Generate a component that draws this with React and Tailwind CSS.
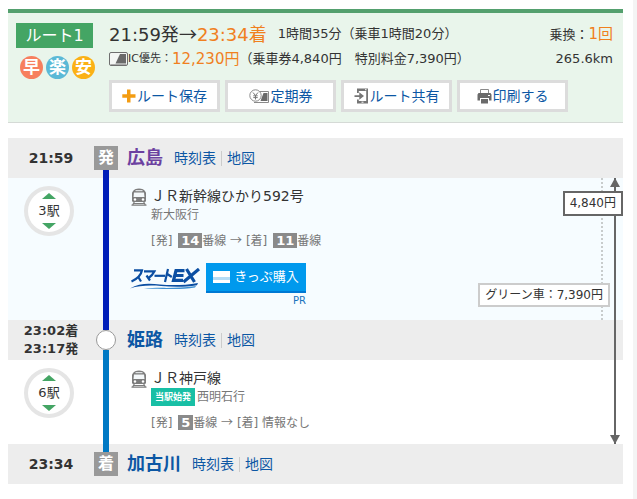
import React from 'react'

function IcCardIcon() {
    return (
        <svg width="19" height="14" viewBox="0 0 19 14" className="shrink-0">
            <rect x="0.500" y="0.500" width="18" height="13" rx="1.500" fill="#f4f6f4" stroke="#6f6f6f" />
            <path d="M1.500 12.500h16" stroke="#aaa" />
            <path d="M11 2H17V11.500H6.500Z" fill="#6a6a6a" />
        </svg>
    )
}

function PlusIcon() {
    return (
        <svg width="14" height="14" viewBox="0 0 14 14" className="shrink-0">
            <path d="M5 0.500h3.500v4.700h5v3.500h-5v4.800h-3.500v-4.800h-4.700v-3.500h4.700z" fill="#f39c12" />
        </svg>
    )
}

function PassIcon() {
    return (
        <svg width="21" height="15" viewBox="0 0 21 15" className="shrink-0">
            <path d="M10 2.500h9.500v11H5" fill="#fff" stroke="#8a8a8a" />
            <path d="M14.500 4H18.500v8h-7z" fill="#6a6a6a" />
            <circle cx="6.500" cy="6.500" r="5.700" fill="#fff" stroke="#8a8a8a" />
            <path d="M4 3.500l2.500 3L9 3.500M6.500 6.500V10.500M4.300 6.800h4.400M4.300 8.600h4.400" fill="none" stroke="#777" />
        </svg>
    )
}

function ShareIcon() {
    return (
        <svg width="15" height="16" viewBox="0 0 15 16" className="shrink-0">
            <path d="M3 0.500h11v15H3v-4h1.800v1.500h7.400V3H4.800v2H3z" fill="#757575" />
            <path d="M7.500 14.200h2M11 1.700h1.500" stroke="#fff" />
            <path d="M0.500 7.200h4.800V4.200L10 8l-4.700 3.800V8.900H0.500z" fill="#757575" />
        </svg>
    )
}

function PrinterIcon() {
    return (
        <svg width="15" height="15" viewBox="0 0 15 15" className="shrink-0">
            <path d="M3.500 4.500V0.500h8v4" fill="#fff" stroke="#8a8a8a" />
            <path d="M1.500 4h12l1 1.500v6h-2.500V9H3v2.500H0.500v-6z" fill="#6a6a6a" />
            <path d="M4 10h7v4.500H4z" fill="#6a6a6a" />
            <path d="M11 6.500h2" stroke="#fff" />
        </svg>
    )
}

function TrainIcon() {
    return (
        <svg width="16" height="18" viewBox="0 0 16 18" className="shrink-0">
            <path d="M4 1.200Q8 -0.400 12 1.200L13.500 2.500 15 4.500V12.500Q15 14 13.500 14H2.500Q1 14 1 12.500V4.500L2.500 2.500Z" fill="#7d7d7d" />
            <path d="M4.500 2.700h7" stroke="#f4f8fa" />
            <path d="M3 4.500h10l.5 4.500h-11z" fill="#f4f8fa" />
            <circle cx="4" cy="11.500" r="1.200" fill="#fff" />
            <circle cx="12" cy="11.500" r="1.200" fill="#fff" />
            <path d="M3.300 14L1.300 17.500M12.700 14L14.700 17.500M2.500 15.500h11M0.500 17.200h15" fill="none" stroke="#7d7d7d" strokeWidth="1.200" />
        </svg>
    )
}

function SmartExLogo() {
    return (
        <svg width="70" height="22" viewBox="0 0 70 22" className="shrink-0" role="img" aria-label="スマートEX">
            <g fill="none" stroke="#0b4ea2" strokeWidth="2.200">
                <path d="M4 2.300h8C11 7.500 7 11 1.500 13.500M8 8.500l3 5" />
                <path d="M14 3.300h10.500C23 6.500 21 8.500 18 10.500M16.500 7.500l3.500 5" />
                <path d="M24.500 7.800h10.500" />
                <path d="M38 1l-3 13M37.300 6l4.500 3" />
            </g>
            <g fill="none" stroke="#0b4ea2" strokeWidth="3.200">
                <path d="M54.500 2.600H46L43.500 12.400h9.500M45 7.500h8.500" />
                <path d="M56.500 1l8 13M69 1L53.500 14" />
            </g>
            <path d="M0 20.500C9 15 19 15.500 30 16.500S54 17.500 68 15l-1 2.200C54 19.500 42 19 31 18S9 17.500 0 20.500z" fill="#0b4ea2" />
            <path d="M14 21C26 18.500 44 21.500 66 18l-1 1.600C48 22.500 28 20 14 21z" fill="#3d8fd1" />
        </svg>
    )
}

function TicketIcon() {
    return (
        <svg width="17" height="12" viewBox="0 0 17 12" className="shrink-0">
            <path d="M0 0h17v12H0z" fill="#fff" />
            <path d="M0 6h17v3H0z" fill="#b5dcf5" />
        </svg>
    )
}

const feature = 'flex size-[23px] shrink-0 items-center justify-center rounded-full text-[17px] font-bold leading-none text-white'

function ActionButton({ icon, label }) {
    return (
        <button type="button" className="flex h-8 w-[111px] items-center justify-center gap-px border-3 border-[#dcdcdc] bg-white text-sm whitespace-nowrap text-[#0c57a4]">
            {icon}
            {label}
        </button>
    )
}

function RouteHeader() {
    return (
        <header className="flex gap-4 border-t-4 border-b border-t-[#54a06e] border-b-[#d5dad6] bg-[#e9f5eb] pr-2.5 pb-2.5 pl-2">
            <div className="w-[77px] shrink-0 pt-[10px]">
                <h1 className="flex h-[25px] items-center justify-center bg-[#44a564] text-base leading-none text-white">ルート1</h1>
                <div className="mt-2 flex gap-[3px] pl-1">
                    <span className={`${feature} bg-[#f77f5e]`}>早</span>
                    <span className={`${feature} bg-[#5bb9d6]`}>楽</span>
                    <span className={`${feature} bg-[#fbb116]`}>安</span>
                </div>
            </div>
            <div className="flex-1 pt-2">
                <div className="flex items-start justify-between whitespace-nowrap">
                    <div>
                        <p className="flex h-[26px] items-center gap-[11px]">
                            <span className="text-lg leading-[26px]">
                                21:59発<span className="font-['Noto_Sans_CJK_JP']">→</span><span className="text-[#f0801e]">23:34着</span>
                            </span>
                            <span>1時間35分（乗車1時間20分）</span>
                        </p>
                        <p className="flex h-6 items-center">
                            <IcCardIcon />
                            <span className="text-[11px]">IC優先：</span>
                            <span className="text-[15px] text-[#f0801e]">12,230円</span>
                            <span>（乗車券4,840円　特別料金7,390円）</span>
                        </p>
                    </div>
                    <div className="text-right">
                        <p className="h-[26px] leading-[26px]">乗換：<span className="text-[15px] text-[#f0801e]">1回</span></p>
                        <p className="h-6 leading-6">265.6km</p>
                    </div>
                </div>
                <div className="mt-[9px] flex gap-[5px]">
                    <ActionButton icon={<PlusIcon />} label="ルート保存" />
                    <ActionButton icon={<PassIcon />} label="定期券" />
                    <ActionButton icon={<ShareIcon />} label="ルート共有" />
                    <ActionButton icon={<PrinterIcon />} label="印刷する" />
                </div>
            </div>
        </header>
    )
}

function Station({ time, marker, name, nameColor = 'text-[#0c57a4]' }) {
    return (
        <div className="flex h-10 bg-[#ededed]">
            <div className="flex w-[86px] shrink-0 items-center justify-center font-bold">{time}</div>
            <div className="flex w-6 shrink-0 flex-col items-center">{marker}</div>
            <div className="flex items-center pl-[9px] text-sm text-[#0c57a4]">
                <a href="#station" className={`mr-[11px] text-lg leading-none font-bold ${nameColor}`}>{name}</a>
                <a href="#timetable" className="leading-none">時刻表</a>
                <span className="mx-[5px] h-[15px] w-px bg-[#ccc]" />
                <a href="#map" className="leading-none">地図</a>
            </div>
        </div>
    )
}

function StopCount({ count }) {
    return (
        <button type="button" className="flex size-[50px] flex-col items-center justify-center gap-1 rounded-full border-4 border-[#e5e5e5] bg-white">
            <svg width="14" height="6" viewBox="0 0 14 6"><path d="M7 0l7 6H0z" fill="#44a564" /></svg>
            <span className="text-[13px] leading-4">{count}駅</span>
            <svg width="14" height="6" viewBox="0 0 14 6"><path d="M0 0h14L7 6z" fill="#44a564" /></svg>
        </button>
    )
}

function Platform({ number }) {
    return <span className="ml-0.5 bg-[#8a8a8a] px-[3px] text-[13px] font-bold text-white">{number}</span>
}

function Segment({ stops, lineColor, className = '', title, children }) {
    return (
        <div className={`flex ${className}`}>
            <div className="flex w-[86px] shrink-0 justify-center pt-2 pr-1">
                <StopCount count={stops} />
            </div>
            <div className="flex w-6 shrink-0 justify-center">
                <div className={`w-1.5 ${lineColor}`} />
            </div>
            <div className="flex gap-1 pt-2 pb-[11px] pl-[13px]">
                <div className="pt-0.5"><TrainIcon /></div>
                <div className="whitespace-nowrap">
                    <p className="text-sm leading-5">{title}</p>
                    {children}
                </div>
            </div>
        </div>
    )
}

function Fares() {
    return (
        <div className="absolute top-10 right-0 bottom-10">
            <div className="absolute top-0 right-5 h-[142px] border-l-2 border-dotted border-[#c8cccc]" />
            <div className="absolute top-0 right-[7px] bottom-0 w-0.5 bg-[#666]" />
            <svg width="10" height="9" viewBox="0 0 10 9" className="absolute top-0 right-[3px]"><path d="M5 0l5 9H0z" fill="#666" /></svg>
            <svg width="10" height="9" viewBox="0 0 10 9" className="absolute right-[3px] bottom-0"><path d="M0 0h10L5 9z" fill="#666" /></svg>
            <div className="absolute top-[13px] right-0 border-2 border-[#666] bg-white px-[5px] text-xs leading-[21px] whitespace-nowrap">4,840円</div>
            <div className="absolute top-[105px] right-[13px] border-2 border-[#ccc] bg-white px-[5px] text-xs leading-5 whitespace-nowrap">グリーン車：7,390円</div>
        </div>
    )
}

export default function App() {
    return (
        <div className="min-h-screen border-r-4 border-[#f4f4f4] bg-white pt-[9px] pr-2.5 pb-[15px] pl-2 font-['DejaVu_Sans','Noto_Sans_CJK_JP',sans-serif] text-[13px] text-[#333]">
            <RouteHeader />
            <main className="relative mt-[15px]">
                <Station
                    time={<span className="text-sm">21:59</span>}
                    name="広島"
                    nameColor="text-[#6c41a0]"
                    marker={<>
                        <span className="mt-2 flex size-6 shrink-0 items-center justify-center bg-[#999] text-base leading-none font-bold text-white">発</span>
                        <span className="w-1.5 flex-1 bg-[#001eb9]" />
                    </>}
                />
                <Segment stops={3} lineColor="bg-[#001eb9]" className="bg-[#f6fcff]" title="ＪＲ新幹線ひかり592号">
                    <p className="text-xs leading-[18px] text-[#777]">新大阪行</p>
                    <p className="mt-1.5 text-xs leading-5 text-[#777]">
                        [発] <Platform number="14" />番線 <span className="font-['Noto_Sans_CJK_JP']">→</span> [着] <Platform number="11" />番線
                    </p>
                    <div className="mt-3 -ml-[21px] flex items-start gap-1.5">
                        <div className="pt-[5px]"><SmartExLogo /></div>
                        <div className="text-right">
                            <a href="#ticket" className="flex h-[30px] w-[100px] items-center justify-center gap-1 border-b-2 border-[#0079d3] bg-[#0099ed] text-[13px] text-white"><TicketIcon />きっぷ購入</a>
                            <p className="text-[10px] leading-4 text-[#1a73bd]">PR</p>
                        </div>
                    </div>
                </Segment>
                <Station
                    time={<span className="text-[13px] leading-[18px]">23:02着<br />23:17発</span>}
                    name="姫路"
                    marker={<>
                        <span className="w-1.5 flex-1 bg-[#001eb9]" />
                        <span className="size-5 shrink-0 rounded-full border border-[#999] bg-white" />
                        <span className="w-1.5 flex-1 bg-[#0079c4]" />
                    </>}
                />
                <Segment stops={6} lineColor="bg-[#0079c4]" title="ＪＲ神戸線">
                    <p className="flex items-center gap-0.5 text-xs leading-[18px] text-[#777]">
                        <span className="bg-[#18bfa5] px-1 text-[9px] font-bold text-white">当駅始発</span>西明石行
                    </p>
                    <p className="mt-1.5 text-xs leading-5 text-[#777]">
                        [発] <Platform number="5" />番線 <span className="font-['Noto_Sans_CJK_JP']">→</span> [着] 情報なし
                    </p>
                </Segment>
                <Station
                    time={<span className="text-sm">23:34</span>}
                    name="加古川"
                    marker={<>
                        <span className="h-2 w-1.5 bg-[#0079c4]" />
                        <span className="flex size-6 shrink-0 items-center justify-center bg-[#999] text-base leading-none font-bold text-white">着</span>
                    </>}
                />
                <Fares />
            </main>
        </div>
    )
}
